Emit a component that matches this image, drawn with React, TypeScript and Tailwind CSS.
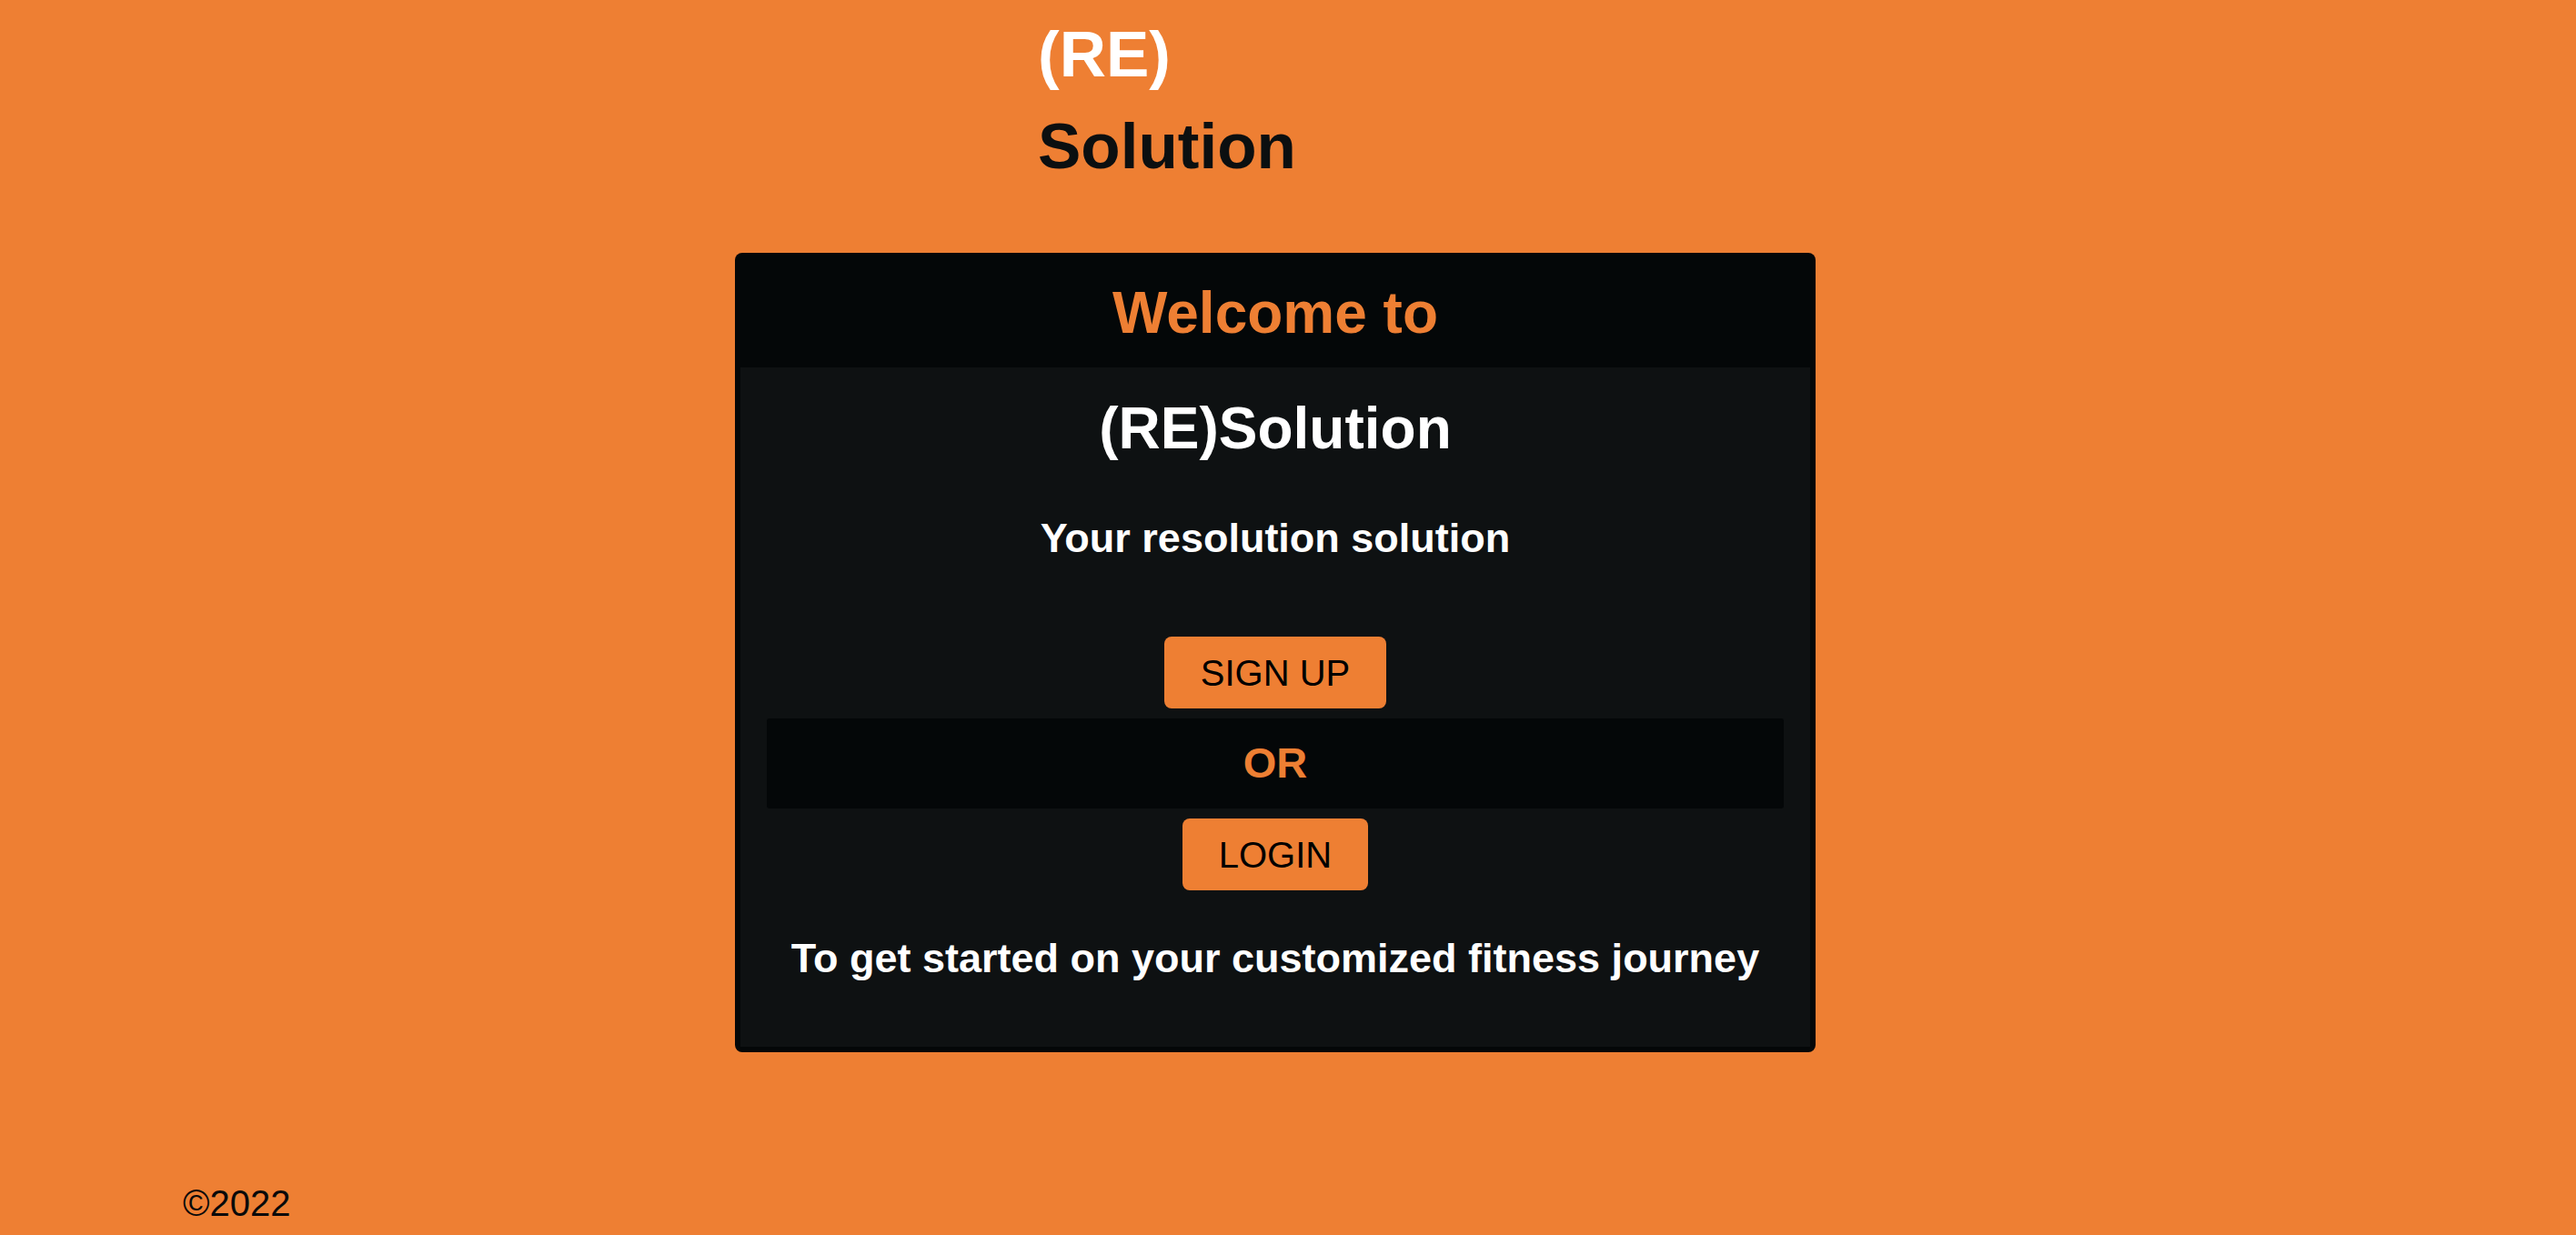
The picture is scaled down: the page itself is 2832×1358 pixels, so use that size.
import React from 'react';

// Кнопка действия (оранжевая)
function ActionButton({label, width}: {label: string; width: string}) {
    return (
        <button
            type="button"
            className={`flex h-[79px] ${width} items-center justify-center rounded-[8px] bg-[#ee7f33] text-[40px] leading-[46px] text-black`}
        >
            {label}
        </button>
    );
}

export default function App() {
    return (
        <div className="flex min-h-screen flex-col bg-[#ee7f33] font-['Liberation_Sans',Arial,sans-serif]">
            {/* Логотип */}
            <header className="ml-[1141px] pt-[9px] text-[71px] font-bold leading-[101px]">
                <div className="text-white">(RE)</div>
                <div className="text-[#0b0f10]">Solution</div>
            </header>

            {/* Карточка приветствия */}
            <main className="ml-[808px] mt-[67px] w-[1188px] rounded-[8px] bg-[#040708] p-[6px]">
                <div className="flex h-[120px] items-center justify-center">
                    <h2 className="text-[64px] font-bold text-[#ee7f33]">Welcome to</h2>
                </div>

                <div className="flex flex-col items-center bg-[#0e1112] pb-[72px] pt-[30px] text-white">
                    <h1 className="text-[64px] font-bold leading-[74px]">(RE)Solution</h1>
                    <p className="mt-[59px] text-[45px] font-bold leading-[50px]">Your resolution solution</p>

                    <div className="mt-[83px]">
                        <ActionButton label="SIGN UP" width="w-[244px]"/>
                    </div>

                    <div className="mt-[11px] flex h-[99px] w-[1118px] items-center justify-center rounded-[3px] bg-[#040708]">
                        <span className="text-[47px] font-bold text-[#ee7f33]">OR</span>
                    </div>

                    <div className="mt-[11px]">
                        <ActionButton label="LOGIN" width="w-[204px]"/>
                    </div>

                    <p className="mt-[50px] text-[45px] font-bold leading-[50px]">
                        To get started on your customized fitness journey
                    </p>
                </div>
            </main>

            <footer className="ml-[201px] mt-[143px] text-[40px] leading-[46px] text-[#0a0a0a]">
                ©2022
            </footer>
        </div>
    );
}
